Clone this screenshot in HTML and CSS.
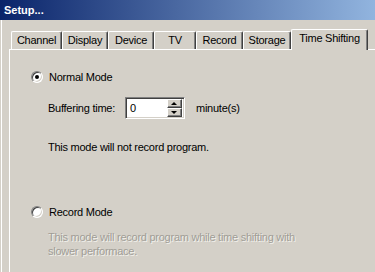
FILE: index.html
```html
<!DOCTYPE html>
<html>
<head>
    <title>Setup...</title>
    <link rel="stylesheet" href="styles.css">
</head>
<body>
    <div class="window">
        <div class="titlebar">Setup...</div>

        <div class="client">
            <div class="tabs">
                <div class="tab w-channel">Channel</div>
                <div class="tab w-display">Display</div>
                <div class="tab w-device">Device</div>
                <div class="tab w-tv">TV</div>
                <div class="tab w-record">Record</div>
                <div class="tab w-storage">Storage</div>
                <div class="tab tab-active w-shift">Time Shifting</div>
            </div>

            <div class="panel">
                <div class="radio-row">
                    <span class="radio checked"></span>
                    <span>Normal Mode</span>
                </div>

                <div class="buffer-row">
                    <span>Buffering time:</span>
                    <div class="spinbox">
                        <span class="spin-value">0</span>
                        <div class="spin-btns">
                            <div class="spin-btn"><span class="arrow-up"></span></div>
                            <div class="spin-btn"><span class="arrow-down"></span></div>
                        </div>
                    </div>
                    <span class="unit">minute(s)</span>
                </div>

                <p class="note">This mode will not record program.</p>

                <div class="radio-row record-row">
                    <span class="radio"></span>
                    <span>Record Mode</span>
                </div>

                <p class="note disabled">This mode will record program while time shifting with<br>slower performace.</p>
            </div>
        </div>
    </div>
</body>
</html>
```

FILE: styles.css
```css
body {
    margin: 0;
    height: 272px;
    overflow: hidden;
    background-color: #D4D0C8;
    font-family: "Liberation Sans", Arial, sans-serif;
    font-size: 11px;
    letter-spacing: -0.25px;
    color: #000000;
}

.window {
    height: 100%;
}

.titlebar {
    height: 20px;
    line-height: 21px;
    padding-left: 4px;
    color: #FFFFFF;
    font-weight: bold;
    letter-spacing: 0;
    background: linear-gradient(to right, #0A246A 0%, #A6CAF0 115%);
}

.client {
    box-sizing: border-box;
    margin-left: 1px;
    border-left: 1px solid #FFFFFF;
    height: 252px;
    padding-left: 7px;
}

/* Tabs */
.tabs {
    display: flex;
    align-items: flex-end;
    height: 29px;
    padding-left: 2px;
    position: relative;
    z-index: 1;
}

.tab {
    box-sizing: border-box;
    height: 18px;
    line-height: 16px;
    text-align: center;
    border-top: 1px solid #FFFFFF;
    border-left: 1px solid #FFFFFF;
    border-right: 1px solid #404040;
    border-top-left-radius: 2px;
    border-top-right-radius: 2px;
    box-shadow: inset -1px 0 #808080;
}

.tab-active {
    height: 21px;
    line-height: 17px;
    margin-bottom: -1px;
    background-color: #D4D0C8;
}

.w-channel { width: 51px; }
.w-display { width: 46px; }
.w-device { width: 46px; }
.w-tv { width: 42px; }
.w-record { width: 47px; }
.w-storage { width: 48px; }
.w-shift { width: 77px; }

/* Panel */
.panel {
    box-sizing: border-box;
    border-top: 1px solid #FFFFFF;
    border-left: 1px solid #FFFFFF;
    height: 223px;
    padding: 20px 0 0 21px;
}

.radio-row {
    display: flex;
    align-items: center;
    height: 14px;
    gap: 6px;
}

.record-row {
    margin-top: 51px;
}

.radio {
    box-sizing: border-box;
    width: 12px;
    height: 12px;
    border-radius: 50%;
    border: 1px solid;
    border-color: #808080 #FFFFFF #FFFFFF #808080;
    box-shadow: inset 1px 1px #404040, inset -1px -1px #D4D0C8;
    background-color: #FFFFFF;
    display: flex;
    justify-content: center;
    align-items: center;
}

.radio.checked::after {
    content: "";
    width: 4px;
    height: 4px;
    border-radius: 50%;
    background-color: #000000;
}

.buffer-row {
    display: flex;
    align-items: center;
    margin: 13px 0 0 17px;
    height: 22px;
}

.spinbox {
    box-sizing: border-box;
    width: 60px;
    height: 22px;
    margin-left: 10px;
    display: flex;
    align-items: center;
    justify-content: space-between;
    border: 1px solid;
    border-color: #808080 #FFFFFF #FFFFFF #808080;
    box-shadow: inset 1px 1px #404040, inset -1px -1px #D4D0C8;
    background-color: #FFFFFF;
    padding: 2px 2px 2px 4px;
}

.spin-value {
    line-height: 16px;
}

.spin-btns {
    display: flex;
    flex-direction: column;
    width: 15px;
    height: 18px;
}

.spin-btn {
    box-sizing: border-box;
    flex: 1;
    background-color: #D4D0C8;
    border: 1px solid;
    border-color: #FFFFFF #404040 #404040 #FFFFFF;
    box-shadow: inset -1px -1px #808080;
    display: flex;
    justify-content: center;
    align-items: center;
}

.arrow-up,
.arrow-down {
    width: 0;
    height: 0;
    border-left: 3px solid transparent;
    border-right: 3px solid transparent;
}

.arrow-up {
    border-bottom: 3px solid #000000;
}

.arrow-down {
    border-top: 3px solid #000000;
}

.unit {
    margin-left: 11px;
}

.note {
    margin: 21px 0 0 17px;
    line-height: 14px;
}

.disabled {
    margin-top: 11px;
    color: #A09D96;
    text-shadow: 1px 1px 0 #F2F0EC;
}
```
